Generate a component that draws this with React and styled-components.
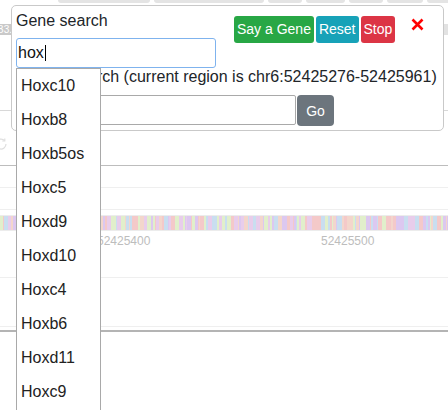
import React from 'react';
import styled, { createGlobalStyle } from 'styled-components';

const GlobalStyle = createGlobalStyle`
  html, body { margin: 0; padding: 0; background: #fff; }
  body { font-family: "Liberation Sans", Arial, Helvetica, sans-serif; color: #212529; }
  #root { width: 448px; height: 410px; overflow: hidden; }
`;

const Page = styled.div`
  position: relative;
  width: 448px;
  height: 410px;
  overflow: hidden;
  background: #fff;
`;

/* ---------- background (genome browser behind the panel) ---------- */
const Backdrop = styled.div`
  display: flex;
  flex-direction: column;
`;

const TabStrip = styled.div`
  display: flex;
  gap: 4px;
  height: 4px;
  padding-left: 58px;
`;

const Tab = styled.div`
  flex: 0 0 ${(p) => p.$w}px;
  height: 3px;
  background: #e4e4e4;
  border-radius: 0 0 3px 3px;
`;

const ChromBar = styled.div`
  margin-top: 20px;
  height: 11px;
  background: #e2e2e2;
  display: flex;
  align-items: center;
`;

const ChromLabel = styled.span`
  font-size: 10px;
  line-height: 11px;
  color: #fff;
  background: #c9c9c9;
  padding: 0 1px;
  margin-left: -4px;
`;

const Rule = styled.div`
  margin-top: ${(p) => p.$mt}px;
  height: ${(p) => p.$h || 1}px;
  background: ${(p) => p.$c};
`;

const IconRow = styled.div`
  margin-top: 26px;
  height: 13px;
  display: flex;
  margin-left: -6px;
`;

const TrackStripe = styled.svg`
  display: block;
  margin-top: 5px;
`;

const Ruler = styled.div`
  display: flex;
  margin-top: 3px;
  padding-left: 97px;
`;

const RulerLabel = styled.span`
  flex: 0 0 224px;
  font-size: 12px;
  line-height: 14px;
  color: #bdbdbd;
`;

/* ---------- search panel ---------- */
const Panel = styled.div`
  position: absolute;
  left: 11px;
  top: 5px;
  width: 433px;
  box-sizing: border-box;
  background: #fff;
  border: 1px solid #c9c9c9;
  border-radius: 5px;
  padding: 6px 4px 4px;
  font-size: 16px;
  color: #212529;
`;

const Header = styled.div`
  display: flex;
  align-items: flex-start;
`;

const SearchColumn = styled.div`
  position: relative;
  width: 200px;
  flex: 0 0 200px;
`;

const Title = styled.div`
  line-height: 18px;
  height: 18px;
`;

const SearchField = styled.div`
  margin-top: 8px;
  height: 30px;
  box-sizing: border-box;
  border: 1px solid #7fb3ee;
  border-radius: 3px;
  padding: 0 1px;
  display: flex;
  align-items: center;
  font-size: 16px;
  color: #111;
`;

const Caret = styled.span`
  width: 1px;
  height: 16px;
  background: #000;
  margin-left: 1px;
`;

const Suggestions = styled.ul`
  position: absolute;
  top: 100%;
  left: 0;
  width: 85px;
  height: 360px;
  box-sizing: border-box;
  margin: 0;
  padding: 0;
  list-style: none;
  background: #fff;
  border: 1px solid #a9a9a9;
  z-index: 3;
`;

const Suggestion = styled.li`
  padding: 8px 4px;
  line-height: 18px;
  font-size: 16px;
  color: #222;
`;

const ButtonGroup = styled.div`
  display: flex;
  gap: 2px;
  margin-left: 18px;
  margin-top: 4px;
`;

const ActionButton = styled.button`
  height: 27px;
  padding: 0 3px;
  border: none;
  border-radius: 3px;
  font-family: inherit;
  font-size: 14px;
  line-height: 27px;
  color: #fff;
  background: ${(p) => p.$bg};
  cursor: pointer;
`;

const CloseButton = styled.button`
  margin-left: 12px;
  margin-top: 2px;
  width: 20px;
  height: 20px;
  padding: 0;
  border: none;
  background: none;
  display: flex;
  align-items: center;
  justify-content: center;
`;

const RegionLine = styled.div`
  line-height: 18px;
  white-space: nowrap;
`;

const CoordRow = styled.div`
  display: flex;
  gap: 1px;
  margin-top: 9px;
`;

const CoordInput = styled.div`
  width: 280px;
  height: 30px;
  box-sizing: border-box;
  border: 1px solid #a9a9a9;
  border-radius: 2px;
`;

const GoButton = styled.button`
  width: 37px;
  height: 31px;
  padding: 0;
  border: none;
  border-radius: 4px;
  background: #6c757d;
  color: #fff;
  font-family: inherit;
  font-size: 14px;
`;

const genes = ['Hoxc10', 'Hoxb8', 'Hoxb5os', 'Hoxc5', 'Hoxd9', 'Hoxd10', 'Hoxc4', 'Hoxb6', 'Hoxd11', 'Hoxc9'];

const stripeColors = ['#f4c9c9', '#dcc8f0', '#c9def0', '#e1efcb', '#e8cdeb', '#f3d6cc'];

function buildStripe() {
  let seed = 17;
  const rnd = () => {
    seed = (seed * 1103515245 + 12345) % 2147483648;
    return seed / 2147483648;
  };
  const bars = [];
  let x = 0;
  while (x < 448) {
    const w = 1 + Math.floor(rnd() * 4);
    const c = stripeColors[Math.floor(rnd() * stripeColors.length)];
    bars.push({ x, w, c });
    x += w;
  }
  return bars;
}

const bars = buildStripe();

export default function App() {
  return (
    <Page>
      <GlobalStyle />
      <Backdrop>
        <TabStrip>
          {[92, 110, 34, 39, 34, 36, 40].map((w, i) => (
            <Tab key={i} $w={w} />
          ))}
        </TabStrip>
        <ChromBar>
          <ChromLabel>B3.1</ChromLabel>
        </ChromBar>
        <Rule $mt={75} $c="#d8d8d8" />
        <IconRow>
          <svg width="14" height="14" viewBox="0 0 14 14">
            <path d="M12 7 A5 5 0 1 1 10.5 3.5" fill="none" stroke="#dedede" strokeWidth="1.2" />
            <path d="M10.8 1.5 L10.8 4 L8.3 4" fill="none" stroke="#dedede" strokeWidth="1.2" />
          </svg>
        </IconRow>
        <Rule $mt={15} $c="#bdbdbd" />
        <Rule $mt={21} $c="#efefef" />
        <Rule $mt={21} $c="#efefef" />
        <TrackStripe width="448" height="16" viewBox="0 0 448 16">
          <rect x="0" y="0" width="448" height="16" fill="#ececec" />
          {bars.map((b, i) => (
            <rect key={i} x={b.x} y="1" width={b.w} height="14" fill={b.c} />
          ))}
        </TrackStripe>
        <Ruler>
          <RulerLabel>52425400</RulerLabel>
          <RulerLabel>52425500</RulerLabel>
        </Ruler>
        <Rule $mt={29} $c="#efefef" />
        <Rule $mt={48} $c="#efefef" />
        <Rule $mt={3} $h={2} $c="#b4b4b4" />
      </Backdrop>

      <Panel>
        <Header>
          <SearchColumn>
            <Title>Gene search</Title>
            <SearchField>
              hox
              <Caret />
            </SearchField>
            <Suggestions>
              {genes.map((g) => (
                <Suggestion key={g}>{g}</Suggestion>
              ))}
            </Suggestions>
          </SearchColumn>
          <ButtonGroup>
            <ActionButton $bg="#28a745">Say a Gene</ActionButton>
            <ActionButton $bg="#17a2b8">Reset</ActionButton>
            <ActionButton $bg="#dc3545">Stop</ActionButton>
          </ButtonGroup>
          <CloseButton aria-label="Close">
            <svg width="13" height="13" viewBox="0 0 13 13">
              <path d="M1.5 1.5 L11.5 11.5 M11.5 1.5 L1.5 11.5" stroke="#ff0000" strokeWidth="2.6" strokeLinecap="butt" />
            </svg>
          </CloseButton>
        </Header>
        <RegionLine>Region search (current region is chr6:52425276-52425961)</RegionLine>
        <CoordRow>
          <CoordInput />
          <GoButton>Go</GoButton>
        </CoordRow>
      </Panel>
    </Page>
  );
}
